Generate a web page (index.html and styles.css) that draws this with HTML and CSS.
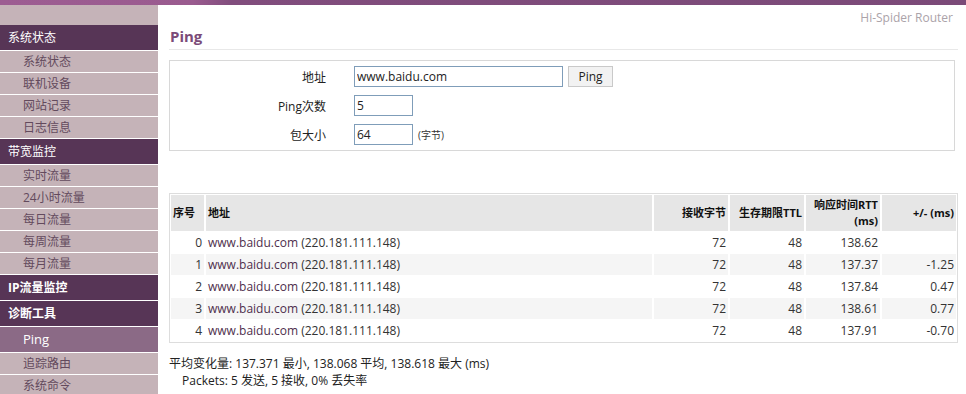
FILE: index.html
```html
<!DOCTYPE html>
<html lang="zh-CN">
<head>
<meta charset="utf-8">
<title>Ping</title>
<link rel="stylesheet" href="styles.css">
</head>
<body>
<div class="topbar"></div>
<div class="layout">
  <nav class="sidebar">
    <div class="nav-head">系统状态</div>
    <div class="nav-item">系统状态</div>
    <div class="nav-item">联机设备</div>
    <div class="nav-item">网站记录</div>
    <div class="nav-item">日志信息</div>
    <div class="nav-head">带宽监控</div>
    <div class="nav-item">实时流量</div>
    <div class="nav-item">24小时流量</div>
    <div class="nav-item">每日流量</div>
    <div class="nav-item">每周流量</div>
    <div class="nav-item">每月流量</div>
    <div class="nav-head bold">IP流量监控</div>
    <div class="nav-head bold">诊断工具</div>
    <div class="nav-item active">Ping</div>
    <div class="nav-item">追踪路由</div>
    <div class="nav-item">系统命令</div>
  </nav>
  <main class="main">
    <div class="brand">Hi-Spider Router</div>
    <h1 class="title">Ping</h1>
    <div class="form-box">
      <div class="form-grid">
        <label class="label">地址</label>
        <div class="field"><input class="input wide" type="text" value="www.baidu.com"><button class="btn">Ping</button></div>
        <label class="label">Ping次数</label>
        <div class="field"><input class="input short" type="text" value="5"></div>
        <label class="label">包大小</label>
        <div class="field"><input class="input short" type="text" value="64"><span class="unit">(字节)</span></div>
      </div>
    </div>
    <table class="result">
      <colgroup>
        <col class="c-idx"><col class="c-addr"><col class="c-num"><col class="c-num"><col class="c-num"><col class="c-num">
      </colgroup>
      <thead>
        <tr>
          <th class="left">序号</th>
          <th class="left">地址</th>
          <th>接收字节</th>
          <th>生存期限TTL</th>
          <th>响应时间RTT<br>(ms)</th>
          <th>+/- (ms)</th>
        </tr>
      </thead>
      <tbody>
        <tr><td>0</td><td class="left"><span class="host">www.baidu.com</span> (220.181.111.148)</td><td>72</td><td>48</td><td>138.62</td><td></td></tr>
        <tr class="alt"><td>1</td><td class="left"><span class="host">www.baidu.com</span> (220.181.111.148)</td><td>72</td><td>48</td><td>137.37</td><td>-1.25</td></tr>
        <tr><td>2</td><td class="left"><span class="host">www.baidu.com</span> (220.181.111.148)</td><td>72</td><td>48</td><td>137.84</td><td>0.47</td></tr>
        <tr class="alt"><td>3</td><td class="left"><span class="host">www.baidu.com</span> (220.181.111.148)</td><td>72</td><td>48</td><td>138.61</td><td>0.77</td></tr>
        <tr><td>4</td><td class="left"><span class="host">www.baidu.com</span> (220.181.111.148)</td><td>72</td><td>48</td><td>137.91</td><td>-0.70</td></tr>
      </tbody>
    </table>
    <div class="summary">
      <div>平均变化量: 137.371 最小, 138.068 平均, 138.618 最大 (ms)</div>
      <div class="packets">Packets: 5 发送, 5 接收, 0% 丢失率</div>
    </div>
  </main>
</div>
</body>
</html>
```
FILE: styles.css
```css
* { box-sizing: border-box; }
html, body { margin: 0; padding: 0; }
body {
  font-family: "Open Sans", "Noto Sans CJK SC", sans-serif;
  font-size: 12px;
  color: #222;
  background: #fff;
  height: 394px;
  overflow: hidden;
}
.topbar {
  height: 5px;
  background: linear-gradient(100deg, #9d5d92 0%, #9a5b8f 20%, #814d7d 24%, #7b4a78 100%);
}
.layout {
  display: flex;
  height: 389px;
}
.sidebar {
  width: 158px;
  flex: none;
  background: #c5b3b8;
  padding-top: 20px;
}
.nav-head {
  height: 26px;
  line-height: 25px;
  padding-left: 8px;
  background: #573556;
  color: #fff;
  font-size: 12px;
  border-bottom: 1px solid #fff;
}
.nav-head.bold { font-weight: bold; }
.nav-item {
  height: 22px;
  line-height: 21px;
  padding-left: 23px;
  color: #634a5d;
  font-size: 12px;
  border-bottom: 1px solid #fff;
}
.nav-item.active {
  height: 26px;
  line-height: 25px;
  background: #8b6a86;
  color: #fff;
  font-size: 13px;
}
.main {
  flex: 1;
  padding: 0 8px 0 11px;
}
.brand {
  text-align: right;
  padding-right: 5px;
  color: #aba3a9;
  font-size: 12px;
  line-height: 16px;
  padding-top: 5px;
}
.title {
  margin: 0;
  font-size: 15px;
  font-weight: bold;
  color: #7b4b78;
  line-height: 20px;
  padding: 0 0 3px 1px;
  border-bottom: 1px solid #e8e8e8;
}
.form-box {
  margin-top: 10px;
  margin-right: 3px;
  border: 1px solid #d8d8d8;
  padding: 5px 0 5px 0;
}
.form-grid {
  display: grid;
  grid-template-columns: 156px 1fr;
  column-gap: 28px;
  row-gap: 8px;
  align-items: center;
}
.label {
  text-align: right;
  color: #222;
}
.field {
  display: flex;
  align-items: center;
  gap: 5px;
}
.input {
  height: 21px;
  border: 1px solid #7f9db9;
  padding: 0 2px;
  font: inherit;
  color: #222;
  background: #fff;
}
.input.wide { width: 209px; }
.input.short { width: 59px; }
.btn {
  height: 21px;
  width: 45px;
  border: 1px solid #c9c9c9;
  background: #f2f2f2;
  font: inherit;
  color: #222;
  padding: 0;
}
.unit {
  font-size: 10px;
  color: #333;
}
.result {
  margin-top: 42px;
  width: 789px;
  table-layout: fixed;
  border-collapse: separate;
  border-spacing: 0;
  border: 1px solid #dddddd;
}
.c-idx { width: 35px; }
.c-num { width: 76px; }
.result th, .result td {
  border-left: 1px solid #fff;
  border-right: 1px solid #fff;
  border-bottom: 1px solid #fff;
  padding: 0 2px;
  text-align: right;
  white-space: nowrap;
}
.result th {
  background: #e6e6e6;
  font-size: 11px;
  font-weight: bold;
  line-height: 16px;
  height: 37px;
  padding-top: 2px;
  padding-bottom: 2px;
  border-top: 1px solid #fff;
  color: #111;
}
.result td {
  height: 22px;
  line-height: 20px;
  color: #333;
}
.result .left { text-align: left; }
.result tr.alt td { background: #f5f5f5; }
.host { color: #4e2f4d; }
.summary {
  margin-top: 12px;
  line-height: 17px;
  color: #222;
}
.packets { padding-left: 13px; }
```
